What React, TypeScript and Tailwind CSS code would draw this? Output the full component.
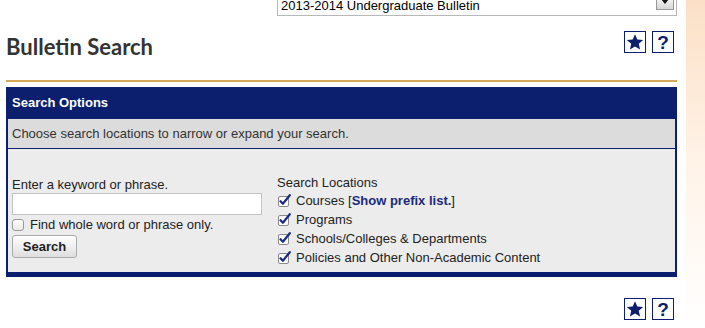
import React from "react";

const NAVY = "#0b1f6e";

function StarBox() {
  return (
    <div className="flex h-[22px] w-[22px] items-center justify-center border border-[#0b1f6e] bg-white">
      <svg width="18" height="18" viewBox="0 0 24 24">
        <path
          d="M12 1.5l3.1 7.2 7.8.6-5.9 5.1 1.8 7.6L12 18l-6.8 4 1.8-7.6-5.9-5.1 7.8-.6z"
          fill={NAVY}
        />
      </svg>
    </div>
  );
}

function HelpBox() {
  return (
    <div className="flex h-[22px] w-[22px] items-center justify-center border border-[#0b1f6e] bg-white font-['Liberation_Sans',Arial,sans-serif] text-[19px] leading-none font-bold text-[#0b1f6e]">
      ?
    </div>
  );
}

function IconPair() {
  return (
    <div className="flex gap-[6px]">
      <StarBox />
      <HelpBox />
    </div>
  );
}

function CheckedBox() {
  return (
    <svg width="14" height="14" viewBox="0 0 14 14" className="shrink-0">
      <rect x="1.5" y="2.5" width="10" height="10" rx="1.5" fill="#fff" stroke="#8a8a8a" />
      <path d="M3.5 7.2l2.4 2.6L12.8 1.2" fill="none" stroke="#1b2c85" strokeWidth="2.2" strokeLinecap="round" strokeLinejoin="round" />
    </svg>
  );
}

function Location({ children }: { children: React.ReactNode }) {
  return (
    <div className="flex h-[19px] items-center gap-[5px]">
      <CheckedBox />
      <span>{children}</span>
    </div>
  );
}

export default function App() {
  return (
    <div className="relative h-[328px] w-[705px] overflow-hidden bg-white font-['Liberation_Sans',Arial,sans-serif] text-[13px] text-[#222]">
      <div className="absolute right-0 top-0 h-full w-[19px] bg-gradient-to-b from-[#fbe0c6] via-[#fff3e8] to-white" />

      <div className="ml-[6px] w-[671px]">
        {/* bulletin picker */}
        <div className="ml-[271px] mt-[-8px] flex h-[24px] w-[400px] items-center justify-between border border-[#b8b8b8] bg-white pl-[3px] pr-[2px]">
          <span className="pt-[3px] leading-none text-black">2013-2014 Undergraduate Bulletin</span>
          <div className="mt-[-5px] flex h-[16px] w-[18px] items-center justify-center border border-[#999] bg-gradient-to-b from-white to-[#d6d6d6]">
            <svg width="8" height="5" viewBox="0 0 8 5">
              <path d="M0 0h8L4 5z" fill="#111" />
            </svg>
          </div>
        </div>

        <div className="mt-[15px] flex items-start justify-between pr-[3px]">
          <h1 className="mt-[2px] font-['Lato',sans-serif] text-[22px] leading-[28px] font-bold text-[#333]">
            Bulletin Search
          </h1>
          <IconPair />
        </div>

        <div className="mt-[19px] h-[2px] bg-[#d4a95c]" />

        <div className="mt-[5px] border-x-2 border-[#0b1f6e]">
          <div className="flex h-[32px] items-center bg-[#0b1f6e] px-[4px] text-[13px] font-bold text-white">
            Search Options
          </div>
          <div className="flex h-[30px] items-center border-b border-[#0b1f6e] bg-[#dcdcdc] px-[4px] text-[#333]">
            Choose search locations to narrow or expand your search.
          </div>
          <div className="flex h-[128px] gap-[15px] border-b-[5px] border-[#0b1f6e] bg-[#ececec] px-[4px] pt-[28px]">
            <div className="flex w-[250px] flex-col">
              <div className="h-[16px] leading-[16px]">Enter a keyword or phrase.</div>
              <div className="h-[22px] border border-[#c4c4c4] bg-white" />
              <div className="flex h-[19px] items-center gap-[6px]">
                <span className="h-[12px] w-[12px] rounded-[3px] border border-[#9a9a9a] bg-gradient-to-b from-white to-[#e8e8e8]" />
                <span>Find whole word or phrase only.</span>
              </div>
              <button className="mt-px h-[23px] w-[65px] rounded-[3px] border border-[#aaa] bg-gradient-to-b from-white to-[#dedede] text-[13px] font-bold text-[#222]">
                Search
              </button>
            </div>
            <div className="mt-[-2px] flex flex-col">
              <div className="h-[16px] leading-[16px]">Search Locations</div>
              <Location>
                Courses [<span className="font-bold text-[#1c2a7a]">Show prefix list.</span>]
              </Location>
              <Location>Programs</Location>
              <Location>Schools/Colleges &amp; Departments</Location>
              <Location>Policies and Other Non-Academic Content</Location>
            </div>
          </div>
        </div>

        <div className="mt-[21px] flex justify-end pr-[3px]">
          <IconPair />
        </div>
      </div>
    </div>
  );
}
